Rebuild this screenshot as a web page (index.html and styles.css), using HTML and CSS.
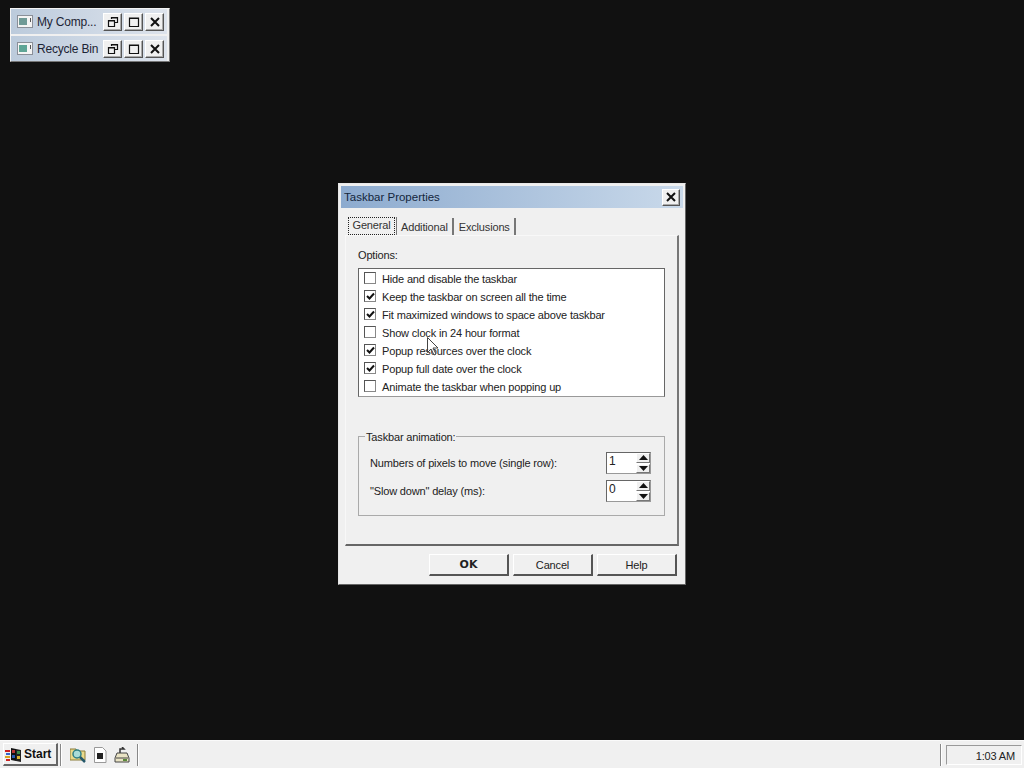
FILE: index.html
```html
<!DOCTYPE html>
<html lang="en">

<head>
    <meta charset="UTF-8">
    <title>Taskbar Properties</title>
    <link rel="stylesheet" href="styles.css">
</head>

<body>
    <div class="desktop">
        <div class="min-windows">
            <div class="min-row">
                <svg class="min-icon" width="16" height="13" viewBox="0 0 16 13"><rect x=".5" y=".5" width="15" height="12" fill="#f4f4f4" stroke="#8a8f98"/><rect x="2" y="3" width="8" height="7" fill="#6f9a96"/><rect x="13" y="3" width="1" height="4" fill="#555"/></svg>
                <span class="min-title">My Comp...</span>
                <div class="min-buttons">
                    <button class="cap-btn"><svg width="12" height="12" viewBox="0 0 12 12"><path d="M4.500 3V1.500h6v5H8M1.500 4.500h6v6h-6z M1.500 5h6 M4.500 2h6" fill="none" stroke="#111" stroke-width="1.200"/></svg></button>
                    <button class="cap-btn"><svg width="12" height="12" viewBox="0 0 12 12"><path d="M1.500 2h9v8.500h-9zM1.500 2.500h9" fill="none" stroke="#111" stroke-width="1.200"/></svg></button>
                    <button class="cap-btn"><svg width="12" height="12" viewBox="0 0 12 12"><path d="M2 2l8 8M10 2l-8 8" stroke="#111" stroke-width="2"/></svg></button>
                </div>
            </div>
            <div class="min-row">
                <svg class="min-icon" width="16" height="13" viewBox="0 0 16 13"><rect x=".5" y=".5" width="15" height="12" fill="#f4f4f4" stroke="#8a8f98"/><rect x="2" y="3" width="8" height="7" fill="#5fa596"/><rect x="13" y="3" width="1" height="4" fill="#555"/></svg>
                <span class="min-title">Recycle Bin</span>
                <div class="min-buttons">
                    <button class="cap-btn"><svg width="12" height="12" viewBox="0 0 12 12"><path d="M4.500 3V1.500h6v5H8M1.500 4.500h6v6h-6z M1.500 5h6 M4.500 2h6" fill="none" stroke="#111" stroke-width="1.200"/></svg></button>
                    <button class="cap-btn"><svg width="12" height="12" viewBox="0 0 12 12"><path d="M1.500 2h9v8.500h-9zM1.500 2.500h9" fill="none" stroke="#111" stroke-width="1.200"/></svg></button>
                    <button class="cap-btn"><svg width="12" height="12" viewBox="0 0 12 12"><path d="M2 2l8 8M10 2l-8 8" stroke="#111" stroke-width="2"/></svg></button>
                </div>
            </div>
        </div>

        <div class="dialog">
            <div class="titlebar">
                <span class="dialog-title">Taskbar Properties</span>
                <button class="cap-btn close-btn"><svg width="12" height="12" viewBox="0 0 12 12"><path d="M2 2l8 8M10 2l-8 8" stroke="#111" stroke-width="2"/></svg></button>
            </div>

            <div class="tabs">
                <div class="tab tab-active"><span class="focus-box">General</span></div>
                <div class="tab">Additional</div>
                <div class="tab">Exclusions</div>
            </div>

            <div class="tab-panel">
                <div class="options-label">Options:</div>
                <div class="options-list">
                    <div class="option"><span class="check"></span><span class="option-text">Hide and disable the taskbar</span></div>
                    <div class="option"><span class="check"><svg width="9" height="9" viewBox="0 0 9 9"><path d="M1 4l2.500 2.500L8 1.500" fill="none" stroke="#111" stroke-width="2"/></svg></span><span class="option-text">Keep the taskbar on screen all the time</span></div>
                    <div class="option"><span class="check"><svg width="9" height="9" viewBox="0 0 9 9"><path d="M1 4l2.500 2.500L8 1.500" fill="none" stroke="#111" stroke-width="2"/></svg></span><span class="option-text">Fit maximized windows to space above taskbar</span></div>
                    <div class="option"><span class="check"></span><span class="option-text">Show clock in 24 hour format</span></div>
                    <div class="option"><span class="check"><svg width="9" height="9" viewBox="0 0 9 9"><path d="M1 4l2.500 2.500L8 1.500" fill="none" stroke="#111" stroke-width="2"/></svg></span><span class="option-text">Popup resources over the clock</span></div>
                    <div class="option"><span class="check"><svg width="9" height="9" viewBox="0 0 9 9"><path d="M1 4l2.500 2.500L8 1.500" fill="none" stroke="#111" stroke-width="2"/></svg></span><span class="option-text">Popup full date over the clock</span></div>
                    <div class="option"><span class="check"></span><span class="option-text">Animate the taskbar when popping up</span></div>
                </div>

                <div class="group">
                    <span class="group-title">Taskbar animation:</span>
                    <div class="spin-row">
                        <span>Numbers of pixels to move (single row):</span>
                        <div class="spinner">
                            <div class="spin-input">1</div>
                            <div class="spin-arrows">
                                <div class="spin-arrow"><svg width="9" height="5" viewBox="0 0 9 5"><path d="M4.500 0L9 5H0z" fill="#111"/></svg></div>
                                <div class="spin-arrow"><svg width="9" height="5" viewBox="0 0 9 5"><path d="M0 0h9L4.500 5z" fill="#111"/></svg></div>
                            </div>
                        </div>
                    </div>
                    <div class="spin-row">
                        <span>"Slow down" delay (ms):</span>
                        <div class="spinner">
                            <div class="spin-input">0</div>
                            <div class="spin-arrows">
                                <div class="spin-arrow"><svg width="9" height="5" viewBox="0 0 9 5"><path d="M4.500 0L9 5H0z" fill="#111"/></svg></div>
                                <div class="spin-arrow"><svg width="9" height="5" viewBox="0 0 9 5"><path d="M0 0h9L4.500 5z" fill="#111"/></svg></div>
                            </div>
                        </div>
                    </div>
                </div>
            </div>

            <div class="dialog-buttons">
                <button class="btn btn-default">OK</button>
                <button class="btn">Cancel</button>
                <button class="btn">Help</button>
            </div>
        </div>

        <svg class="cursor" width="13" height="20" viewBox="0 0 13 20"><path d="M.5.500v15l3.500-3.500 3 6 2-1-3-6h5z" fill="#fff" fill-opacity=".85" stroke="#444"/></svg>
    </div>

    <div class="taskbar">
        <button class="start-btn">
            <svg width="17" height="15" viewBox="0 0 17 15"><path d="M0 3h5v2H0z" fill="#c22"/><path d="M1 6h4v2H1z" fill="#36c"/><path d="M0 9h5v2H0z" fill="#d9a520"/><path d="M1 12h4v2H1z" fill="#c22"/><path d="M6 1l5 1v12l-5-1z" fill="#111"/><path d="M11 2l5 1v12l-5-1z" fill="#222"/><rect x="7" y="3" width="3" height="3" fill="#b33"/><rect x="12" y="4" width="3" height="3" fill="#3a8a4a"/><rect x="7" y="8" width="3" height="3" fill="#2a5ab0"/><rect x="12" y="9" width="3" height="3" fill="#d9b030"/></svg>
            Start
        </button>
        <div class="divider"></div>
        <div class="quick-launch">
            <svg width="16" height="16" viewBox="0 0 16 16"><path d="M0 2h6l1 2h8v9H0z" fill="#ead98a" stroke="#8a7d3a"/><circle cx="7" cy="7" r="4" fill="#a9dcd8" stroke="#2f7f86" stroke-width="1.500"/><path d="M10 10l5 5" stroke="#25586a" stroke-width="2.500"/></svg>
            <svg width="14" height="16" viewBox="0 0 14 16"><path d="M1.500.500h8l3.500 3.500v11.500H1.500z" fill="#fff" stroke="#999"/><rect x="4" y="6" width="6" height="6" fill="#222"/></svg>
            <svg width="16" height="16" viewBox="0 0 16 16"><path d="M6 6V2h4L8 0" fill="none" stroke="#333" stroke-width="1.500"/><path d="M3 6h10l2 5v4H1v-4z" fill="#e9e3c4" stroke="#444"/><path d="M2 11h12" stroke="#444"/><rect x="9" y="12" width="4" height="2" fill="#5a8a3a"/></svg>
        </div>
        <div class="divider"></div>
        <div class="taskbar-space"></div>
        <div class="divider tray-divider"></div>
        <div class="clock">1:03 AM</div>
    </div>
</body>

</html>
```

FILE: styles.css
```css
html, body {
    height: 100%;
}

body {
    margin: 0;
    display: flex;
    flex-direction: column;
    background-color: #111;
    font-family: "Liberation Sans", Arial, sans-serif;
    font-size: 11px;
    letter-spacing: -0.16px;
    color: #222;
    overflow: hidden;
}

button {
    font-family: inherit;
    font-size: inherit;
    letter-spacing: inherit;
    color: inherit;
    padding: 0;
}

.desktop {
    flex: 1;
    position: relative;
}

/* minimized windows, top left of the desktop */
.min-windows {
    position: absolute;
    left: 10px;
    top: 8px;
    width: 160px;
    height: 54px;
    box-sizing: border-box;
    padding: 0 2px 0 0;
    display: flex;
    flex-direction: column;
    gap: 2px;
    background-color: #f0f0f0;
    border: 1px solid #f4f4f4;
    border-right-color: #777;
    border-bottom-color: #777;
}

.min-row {
    flex: 1;
    display: flex;
    align-items: center;
    padding: 0 3px 0 6px;
    font-size: 12px;
    letter-spacing: -0.2px;
    background: linear-gradient(to right, #bccbdc, #dde3ec);
}

.min-icon {
    flex-shrink: 0;
}

.min-title {
    margin-left: 4px;
    flex: 1;
    min-width: 0;
    white-space: nowrap;
    color: #1c2434;
}

.min-buttons {
    display: flex;
    gap: 2px;
    flex-shrink: 0;
}

.cap-btn {
    width: 19px;
    height: 18px;
    display: flex;
    align-items: center;
    justify-content: center;
    background-color: #f0f0f0;
    border: 1px solid #fff;
    border-right-color: #555;
    border-bottom-color: #555;
    box-shadow: inset -1px -1px 0 #aaa;
}

/* dialog */
.dialog {
    position: absolute;
    left: 338px;
    top: 183px;
    width: 348px;
    height: 402px;
    box-sizing: border-box;
    padding: 2px;
    display: flex;
    flex-direction: column;
    background-color: #f0f0f0;
    border: 1px solid #e8e8e8;
    border-right-color: #666;
    border-bottom-color: #666;
}

.titlebar {
    height: 22px;
    flex-shrink: 0;
    display: flex;
    align-items: center;
    justify-content: space-between;
    padding: 0 3px 0 3px;
    background: linear-gradient(to right, #8dabcf, #c9d9ea);
}

.dialog-title {
    color: #14263c;
    font-size: 11.5px;
    letter-spacing: 0;
}

.close-btn {
    width: 18px;
    height: 17px;
}

.tabs {
    display: flex;
    align-items: flex-end;
    height: 27px;
    flex-shrink: 0;
    margin: 0 0 0 7px;
}

.tab {
    height: 17px;
    line-height: 18px;
    padding: 0 4px 0 3px;
    border-right: 2px solid #777;
    color: #333;
}

.tab:last-child {
    padding-left: 5px;
}

.tab-active {
    height: 18px;
    margin-right: 1px;
    padding: 0 1px 0 0;
    border-right-width: 1px;
}

.focus-box {
    display: block;
    width: 45px;
    height: 16px;
    line-height: 15px;
    text-align: center;
    border: 1px dotted #222;
}

.tab-panel {
    height: 311px;
    box-sizing: border-box;
    margin: 0 4px 0 4px;
    padding: 13px 12px 0 12px;
    border: 1px solid #f8f8f8;
    border-right: 2px solid #777;
    border-bottom: 2px solid #666;
}

.options-label {
    height: 19px;
}

.options-list {
    height: 129px;
    box-sizing: border-box;
    padding: 0 0 0 5px;
    background-color: #fff;
    border: 1px solid #666;
    border-bottom-color: #999;
}

.option {
    height: 18px;
    display: flex;
    align-items: center;
    gap: 6px;
    white-space: nowrap;
}

.option-text {
    padding-top: 1px;
}

.check {
    width: 10px;
    height: 10px;
    flex-shrink: 0;
    display: flex;
    align-items: center;
    justify-content: center;
    border: 1px solid #888;
    border-top-color: #555;
    border-left-color: #555;
}

.group {
    position: relative;
    margin-top: 39px;
    height: 80px;
    box-sizing: border-box;
    padding: 15px 13px 0 11px;
    border: 1px solid #aaa;
}

.group-title {
    position: absolute;
    left: 6px;
    top: -6px;
    padding: 0 1px;
    line-height: 13px;
    background-color: #f0f0f0;
}

.spin-row {
    display: flex;
    align-items: center;
    justify-content: space-between;
    height: 22px;
    margin-bottom: 6px;
}

.spinner {
    display: flex;
    width: 45px;
    height: 22px;
    box-sizing: border-box;
    background-color: #fff;
    border: 1px solid #666;
    border-right-color: #999;
    border-bottom-color: #999;
}

.spin-input {
    flex: 1;
    padding-left: 2px;
    line-height: 17px;
    font-size: 12px;
}

.spin-arrows {
    width: 14px;
    display: flex;
    flex-direction: column;
    gap: 1px;
}

.spin-arrow {
    flex: 1;
    display: flex;
    align-items: center;
    justify-content: center;
    background-color: #f0f0f0;
    border: 1px solid #fff;
    border-right-color: #777;
    border-bottom-color: #777;
}

.dialog-buttons {
    display: flex;
    justify-content: flex-end;
    gap: 4px;
    margin-top: 8px;
    padding-right: 6px;
}

.btn {
    width: 80px;
    height: 22px;
    background-color: #f0f0f0;
    border: 1px solid #fff;
    border-right: 2px solid #555;
    border-bottom: 2px solid #555;
}

.btn-default {
    font-weight: bold;
    font-family: "DejaVu Sans", sans-serif;
    letter-spacing: 0;
}

.cursor {
    position: absolute;
    left: 427px;
    top: 337px;
}

/* taskbar */
.taskbar {
    height: 28px;
    flex-shrink: 0;
    box-sizing: border-box;
    display: flex;
    align-items: center;
    padding: 0 2px 0 3px;
    background-color: #f0f0f0;
    border-top: 1px solid #fafafa;
}

.start-btn {
    width: 55px;
    height: 23px;
    display: flex;
    align-items: center;
    gap: 2px;
    padding-left: 1px;
    font-weight: bold;
    font-size: 12px;
    letter-spacing: 0;
    color: #111;
    background-color: #f0f0f0;
    border: 1px solid #fff;
    border-right: 2px solid #666;
    border-bottom: 2px solid #666;
}

.divider {
    width: 1px;
    height: 22px;
    flex-shrink: 0;
    background-color: #888;
    border-right: 1px solid #fff;
    margin-left: 2px;
}

.quick-launch {
    display: flex;
    align-items: center;
    gap: 7px;
    box-sizing: border-box;
    padding-left: 8px;
    width: 73px;
}

.taskbar-space {
    flex: 1;
}

.tray-divider {
    margin: 0 4px 0 0;
}

.clock {
    width: 76px;
    height: 20px;
    box-sizing: border-box;
    line-height: 20px;
    text-align: right;
    padding-right: 6px;
    border: 1px solid #999;
    border-right-color: #fff;
    border-bottom-color: #fff;
}
```
